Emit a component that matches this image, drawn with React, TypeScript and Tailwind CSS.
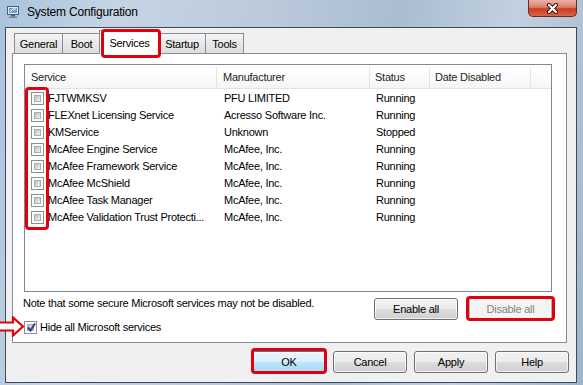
import React from "react";

const services = [
  { name: "FJTWMKSV", maker: "PFU LIMITED", status: "Running" },
  { name: "FLEXnet Licensing Service", maker: "Acresso Software Inc.", status: "Running" },
  { name: "KMService", maker: "Unknown", status: "Stopped" },
  { name: "McAfee Engine Service", maker: "McAfee, Inc.", status: "Running" },
  { name: "McAfee Framework Service", maker: "McAfee, Inc.", status: "Running" },
  { name: "McAfee McShield", maker: "McAfee, Inc.", status: "Running" },
  { name: "McAfee Task Manager", maker: "McAfee, Inc.", status: "Running" },
  { name: "McAfee Validation Trust Protecti...", maker: "McAfee, Inc.", status: "Running" },
];

const CheckBox = ({ checked }: { checked?: boolean }) => (
  <span className="w-[13px] h-[13px] border border-[#8f8f8f] bg-white p-[2px] flex shrink-0 relative">
    <span className="flex-1 border border-[#a9aeb5] bg-[linear-gradient(135deg,#b7bcc3_0%,#dfe2e5_65%,#f2f3f4_100%)]" />
    {checked && (
      <svg className="absolute left-[1px] top-[0px]" width="11" height="11" viewBox="0 0 11 11">
        <path d="M2 5.5 L4.5 8.5 L9 1.5" fill="none" stroke="#2c3f8c" strokeWidth="2" />
      </svg>
    )}
  </span>
);

const WinButton = ({
  label,
  className = "",
  variant = "normal",
  children,
}: {
  label: string;
  className?: string;
  variant?: "normal" | "default" | "disabled";
  children?: React.ReactNode;
}) => {
  const look =
    variant === "default"
      ? "border-[#3c7fb1] bg-[linear-gradient(180deg,#eaf6fd_0%,#d9f0fc_50%,#bee6fd_50%,#a7d9f5_100%)] text-black"
      : variant === "disabled"
      ? "border-[#adb2b5] bg-[#f4f4f4] text-[#838383]"
      : "border-[#707070] bg-[linear-gradient(180deg,#f2f2f2_0%,#ebebeb_50%,#dddddd_50%,#cfcfcf_100%)] text-black";
  return (
    <div
      className={`relative h-[22px] rounded-[3px] border shadow-[inset_0_0_0_1px_rgba(255,255,255,0.7)] flex items-center justify-center ${look} ${className}`}
    >
      {label}
      {children}
    </div>
  );
};

const RedBox = ({ className }: { className: string }) => (
  <div className={`absolute border-[3px] border-[#e1000e] rounded-[4px] pointer-events-none ${className}`} />
);

const tabLook =
  "h-[20px] pt-[2px] border border-b-0 border-[#898c95] bg-[linear-gradient(180deg,#f6f6f6_0%,#e8e8e8_50%,#dedede_100%)] flex items-center justify-center";

const App = () => {
  return (
    <div className="w-[583px] h-[385px] relative overflow-hidden bg-[linear-gradient(100deg,#a9c3dd_0%,#c6d5e5_18%,#bccbdc_40%,#aabdd1_62%,#c2d1e1_80%,#9fb4ca_100%)] font-['Liberation_Sans',Arial,sans-serif] text-[11px] tracking-[-0.25px] text-black">
      {/* title bar */}
      <div className="h-[27px] flex items-start">
        <div className="flex items-center pl-[7px] pt-[5px] gap-[8px]">
          <svg width="12" height="12" viewBox="0 0 12 12">
            <rect x="0.5" y="0.5" width="11" height="8" fill="#dfe9f5" stroke="#51606f" />
            <rect x="2" y="2" width="8" height="5" fill="#6f9fd6" />
            <path d="M3 6 L6 3 L9 3" fill="none" stroke="#ffffff" strokeWidth="1" />
            <rect x="4" y="9" width="4" height="1.5" fill="#51606f" />
            <rect x="2" y="10.5" width="8" height="1.5" fill="#7b8794" />
          </svg>
          <span className="text-[12px] tracking-[-0.2px] leading-[14px]">System Configuration</span>
        </div>
        <div className="ml-auto mr-[6px] w-[49px] h-[17px] rounded-b-[5px] border border-t-0 border-[#6b2c22] bg-[linear-gradient(180deg,#eab2a6_0%,#dc7f6c_45%,#c63d22_55%,#d8654a_100%)] flex items-center justify-center">
          <svg width="13" height="11" viewBox="0 0 13 11">
            <path d="M3 2 L10 9 M10 2 L3 9" stroke="#3b1710" strokeWidth="4.2" strokeLinecap="round" />
            <path d="M3 2 L10 9 M10 2 L3 9" stroke="#ffffff" strokeWidth="2.2" strokeLinecap="round" />
          </svg>
        </div>
      </div>

      {/* client area */}
      <div className="ml-[5px] w-[572px] h-[356px] border border-[#3f4a57] bg-[#f0f0f0] flex flex-col">
        {/* tabs */}
        <div className="h-[25px] flex items-end pl-[8px] shrink-0">
          <div className={`w-[49px] ${tabLook}`}>General</div>
          <div className={`ml-[-1px] w-[39px] ${tabLook}`}>Boot</div>
          <div className="relative z-10 ml-[-2px] mb-[-1px] w-[61px] h-[24px] border border-b-0 border-[#898c95] bg-white flex items-center justify-center pt-[1px]">
            Services
            <RedBox className="left-[1px] right-[-2px] top-[-2px] bottom-[-4px]" />
          </div>
          <div className={`ml-[-2px] w-[48px] ${tabLook}`}>Startup</div>
          <div className={`ml-[-1px] w-[39px] ${tabLook}`}>Tools</div>
        </div>

        {/* tab page */}
        <div className="ml-[6px] w-[555px] h-[290px] border border-[#898c95] bg-white flex flex-col shrink-0">
          <div className="relative ml-[11px] mt-[10px] w-[528px] h-[228px] border border-[#828790] bg-white flex flex-col">
            {/* header */}
            <div className="h-[24px] pt-[2px] flex border-b border-[#e2e3e6] bg-[linear-gradient(180deg,#ffffff_0%,#fbfbfc_60%,#f3f4f6_100%)] text-[#1e1e1e] shrink-0">
              <div className="w-[192px] pl-[6px] flex items-center border-r border-[#e2e3e6]">Service</div>
              <div className="w-[153px] pl-[6px] flex items-center border-r border-[#e2e3e6]">Manufacturer</div>
              <div className="w-[60px] pl-[5px] flex items-center border-r border-[#e2e3e6]">Status</div>
              <div className="w-[101px] pl-[5px] flex items-center border-r border-[#e2e3e6]">Date Disabled</div>
              <div className="flex-1" />
            </div>
            {/* rows */}
            <div className="pt-[1px] flex flex-col">
              {services.map((s) => (
                <div key={s.name} className="h-[17px] flex items-center">
                  <div className="w-[192px] pl-[6px] flex items-center gap-[4px] overflow-hidden whitespace-nowrap">
                    <CheckBox />
                    <span>{s.name}</span>
                  </div>
                  <div className="w-[153px] pl-[7px] whitespace-nowrap">{s.maker}</div>
                  <div className="w-[60px] pl-[6px]">{s.status}</div>
                </div>
              ))}
            </div>
            <RedBox className="left-[0px] top-[22px] w-[24px] h-[143px]" />
          </div>

          {/* below the list */}
          <div className="mt-[6px] flex pl-[10px] pr-[14px]">
            <div className="flex flex-col">
              <span className="leading-[12px] mt-[-1px]">Note that some secure Microsoft services may not be disabled.</span>
              <div className="mt-[12px] ml-[1px] flex items-center gap-[3px] h-[13px]">
                <CheckBox checked />
                <span>Hide all Microsoft services</span>
              </div>
            </div>
            <div className="ml-auto flex gap-[11px]">
              <WinButton label="Enable all" className="w-[84px]" />
              <WinButton label="Disable all" variant="disabled" className="w-[83px]">
                <RedBox className="left-[-4px] right-[-4px] top-[-3px] bottom-[-2px]" />
              </WinButton>
            </div>
          </div>
        </div>

        {/* dialog buttons */}
        <div className="mt-[8px] flex justify-end gap-[7px] pr-[7px]">
          <WinButton label="OK" variant="default" className="w-[74px]">
            <RedBox className="left-[-2px] right-[-2px] top-[-4px] bottom-[-2px]" />
          </WinButton>
          <WinButton label="Cancel" className="w-[74px]" />
          <WinButton label="Apply" className="w-[74px]" />
          <WinButton label="Help" className="w-[74px]" />
        </div>
      </div>

      {/* annotation arrow */}
      <svg className="absolute left-0 top-[316px]" width="25" height="21" viewBox="0 0 25 21">
        <path d="M-2 6.5 L13 6.5 L13 1.5 L23 10.5 L13 19.5 L13 14.5 L-2 14.5 Z" fill="#ffffff" stroke="#e1000e" strokeWidth="2.2" strokeLinejoin="miter" />
      </svg>
    </div>
  );
};

export default App;
